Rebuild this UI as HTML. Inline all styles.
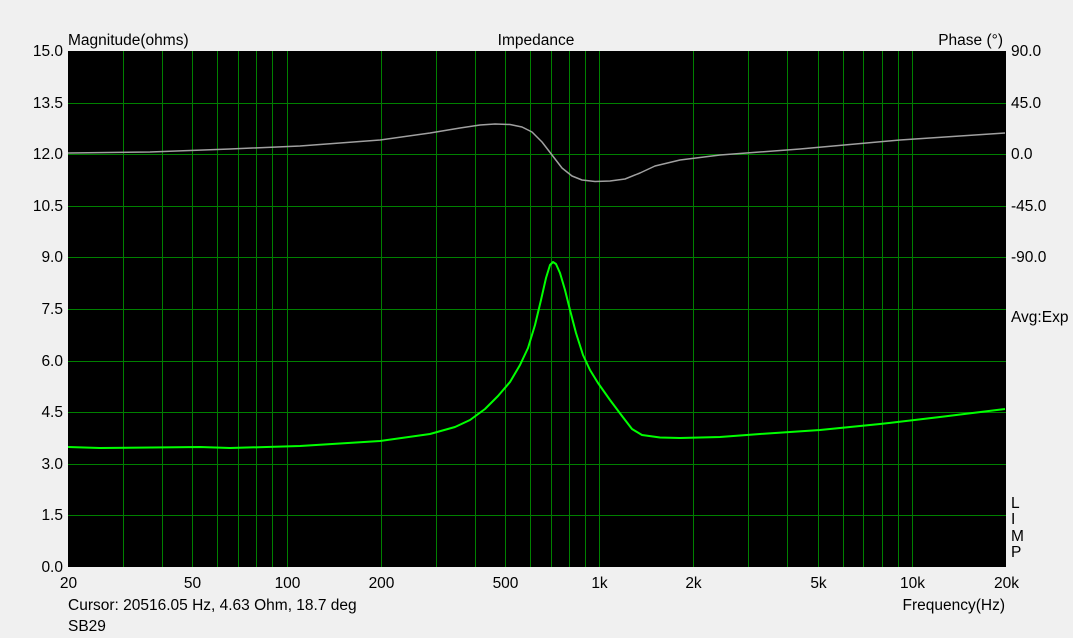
<!DOCTYPE html>
<html><head><meta charset="utf-8"><style>
html,body{margin:0;padding:0;background:#f0f0f0;width:1073px;height:638px;overflow:hidden}
svg{display:block}
text{font-family:"Liberation Sans",sans-serif;font-size:15.5px;fill:#000}
</style></head><body>
<svg width="1073" height="638" xmlns="http://www.w3.org/2000/svg">
<rect x="68" y="51" width="938" height="516" fill="#000"/>
<g fill="#008000" shape-rendering="crispEdges" id="grid"></g>
<polyline fill="none" stroke="#a0a0a0" stroke-width="1.5" stroke-linejoin="round" points="68,153 150,152 230,149 300,146 380,140 430,133 460,128 480,125 495,124 510,124.5 522,127 532,132 542,142 552,155 562,168 572,176 582,180 595,181.5 610,181 625,179 640,173 655,166 680,160 720,155 800,149 900,140 1005,133"/>
<polyline fill="none" stroke="#00ff00" stroke-width="2" stroke-linejoin="round" points="68,447 100,448 200,447 230,448 300,446 380,441 430,434 455,427 470,420 485,409 498,396 510,382 520,365 528,348 535,325 541,300 546,278 550,265 553,262 556,264 560,273 565,290 570,310 576,333 583,355 590,370 598,383 610,400 622,416 632,429 642,435 660,437.5 680,438 720,437 760,434 820,430 880,424 940,417 1005,409"/>
<g id="labels"></g>
<text x="68" y="45">Magnitude(ohms)</text>
<text x="536" y="45" text-anchor="middle">Impedance</text>
<text x="1003" y="45" text-anchor="end">Phase (°)</text>
<text x="1011" y="322">Avg:Exp</text>
<text x="1011" y="508">L</text><text x="1011" y="524">I</text><text x="1011" y="541">M</text><text x="1011" y="557">P</text>
<text x="68" y="610">Cursor: 20516.05 Hz, 4.63 Ohm, 18.7 deg</text>
<text x="1005" y="610" text-anchor="end">Frequency(Hz)</text>
<text x="68" y="631">SB29</text>
</svg>
<script>
var ns="http://www.w3.org/2000/svg",g=document.getElementById('grid'),L=document.getElementById('labels');
function rc(x,y,w,h){var l=document.createElementNS(ns,'rect');l.setAttribute('x',x);l.setAttribute('y',y);l.setAttribute('width',w);l.setAttribute('height',h);g.appendChild(l);}
function tx(x,y,s,a){var t=document.createElementNS(ns,'text');t.setAttribute('x',x);t.setAttribute('y',y);if(a)t.setAttribute('text-anchor',a);t.textContent=s;L.appendChild(t);}
var mag=['15.0','13.5','12.0','10.5','9.0','7.5','6.0','4.5','3.0','1.5','0.0'],ph=['90.0','45.0','0.0','-45.0','-90.0'];
for(var i=0;i<=10;i++){var y=Math.round(51+i*51.6);if(i>0&&i<10)rc(68,y,938,1);tx(63,y+5,mag[i],'end');if(i<5)tx(1011,y+5,ph[i]);}
var fx=function(f){return Math.round(68+312.67*Math.log10(f/20));};
var fs=[30,40,50,60,70,80,90,100,200,300,400,500,600,700,800,900,1000,2000,3000,4000,5000,6000,7000,8000,9000,10000];
fs.forEach(function(f){rc(fx(f),51,1,516);});
[[20,'20'],[50,'50'],[100,'100'],[200,'200'],[500,'500'],[1000,'1k'],[2000,'2k'],[5000,'5k'],[10000,'10k'],[20000,'20k']].forEach(function(p){tx(fx(p[0])+0.5,588,p[1],'middle');});
</script>
</body></html>
